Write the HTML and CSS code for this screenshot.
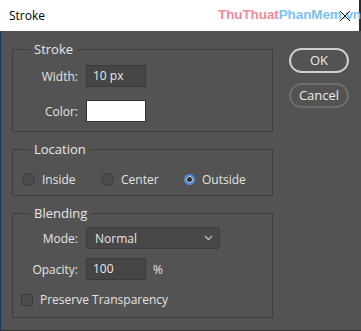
FILE: index.html
```html
<!DOCTYPE html>
<html lang="en">
<head>
    <meta charset="UTF-8">
    <title>Stroke</title>
    <link rel="stylesheet" href="styles.css">
</head>
<body>
    <div class="window">
        <div class="titlebar">
            <span class="title">Stroke</span>
            <span class="watermark"><span class="wm-pink">ThuThuat</span><span class="wm-blue">PhanMem.vn</span></span>
            <svg class="close" width="12" height="12" viewBox="0 0 12 12">
                <path d="M1 1 L11 11 M11 1 L1 11" stroke="#111" stroke-width="1" fill="none"/>
            </svg>
        </div>
        <div class="dialog">
            <div class="groups">
                <fieldset class="group group-stroke">
                    <legend>Stroke</legend>
                    <div class="row">
                        <label>Width:</label>
                        <div class="field">10 px</div>
                    </div>
                    <div class="row">
                        <label>Color:</label>
                        <div class="swatch"></div>
                    </div>
                </fieldset>

                <fieldset class="group group-location">
                    <legend>Location</legend>
                    <div class="radios">
                        <div class="radio radio-inside"><span class="dot"></span>Inside</div>
                        <div class="radio radio-center"><span class="dot"></span>Center</div>
                        <div class="radio"><span class="dot checked"></span>Outside</div>
                    </div>
                </fieldset>

                <fieldset class="group group-blending">
                    <legend>Blending</legend>
                    <div class="row">
                        <label>Mode:</label>
                        <div class="select">
                            <span>Normal</span>
                            <svg width="9" height="6" viewBox="0 0 9 6">
                                <path d="M1 1 L4.5 4.5 L8 1" stroke="#bdbdbd" stroke-width="1.3" fill="none"/>
                            </svg>
                        </div>
                    </div>
                    <div class="row">
                        <label>Opacity:</label>
                        <div class="field">100</div>
                        <span class="unit">%</span>
                    </div>
                    <div class="check"><span class="box"></span>Preserve Transparency</div>
                </fieldset>
            </div>
            <div class="buttons">
                <div class="btn btn-ok">OK</div>
                <div class="btn">Cancel</div>
            </div>
        </div>
    </div>
</body>
</html>
```

FILE: styles.css
```css
body {
    margin: 0;
    background-color: #2a2a2a;
    font-family: 'Open Sans', 'Liberation Sans', sans-serif;
}
.window {
    width: 361px;
    height: 331px;
    display: flex;
    flex-direction: column;
    overflow: hidden;
}
.titlebar {
    height: 31px;
    flex-shrink: 0;
    background-color: #ffffff;
    display: flex;
    align-items: center;
    position: relative;
    border-right: 2px solid #2b2b2b;
}
.title {
    font-size: 12px;
    color: #000;
    margin-left: 9px;
}
.watermark {
    position: absolute;
    left: 218px;
    top: 7px;
    white-space: nowrap;
    font-family: 'Liberation Sans', sans-serif;
    font-weight: bold;
    font-size: 13.5px;
    letter-spacing: -0.1px;
}
.wm-pink {
    color: #f28a9b;
}
.wm-blue {
    color: #7fc0f2;
}
.close {
    position: absolute;
    left: 339px;
    top: 10px;
}
.dialog {
    flex: 1;
    background-color: #535353;
    border-left: 1px solid #1d3557;
    border-bottom: 1px solid #333;
    display: flex;
    padding: 10px 0 0 11px;
    color: #e4e4e4;
    font-size: 12px;
}
.groups {
    width: 261px;
    flex-shrink: 0;
}
.group {
    margin: 0 0 9px 0;
    padding: 0;
    border: 1px solid #3d3d3d;
    min-width: 0;
}
.group legend {
    margin-left: 17px;
    padding: 0 4px;
    font-size: 13px;
    line-height: 16px;
    color: #e8e8e8;
}
.group-stroke {
    padding: 8px 0 9px 0;
}
.group-location {
    padding: 13px 0 7px 0;
}
.group-blending {
    padding: 6px 0 9px 0;
}
.row {
    display: grid;
    grid-template-columns: 65px auto auto;
    justify-content: start;
    align-items: center;
    column-gap: 8px;
    margin-bottom: 13px;
}
.row:last-child {
    margin-bottom: 0;
}
.group-blending .row {
    margin-bottom: 9px;
}
.row label {
    text-align: right;
}
.field {
    width: 52px;
    height: 20px;
    line-height: 20px;
    padding-left: 6px;
    background-color: #454545;
    border: 1px solid #3a3a3a;
    color: #ececec;
}
.swatch {
    width: 58px;
    height: 20px;
    background-color: #ffffff;
    border: 1px solid #333;
}
.unit {
    margin-left: -1px;
}
.select {
    width: 118px;
    height: 20px;
    padding: 0 6px 0 8px;
    display: flex;
    align-items: center;
    justify-content: space-between;
    background-color: #474747;
    border: 1px solid #3c3c3c;
    border-radius: 3px;
}
.radios {
    display: flex;
    align-items: center;
    height: 18px;
    padding-left: 9px;
}
.radio {
    display: flex;
    align-items: center;
    gap: 7px;
}
.radio-inside {
    width: 79px;
}
.radio-center {
    width: 83px;
}
.dot {
    width: 11px;
    height: 11px;
    border-radius: 50%;
    border: 1px solid #3a3a3a;
    background-color: #4c4c4c;
}
.dot.checked {
    width: 7px;
    height: 7px;
    border: 2px solid #4a90e2;
    background-color: #2b2b2b;
    box-shadow: inset 0 0 0 1px #d8d8d8;
}
.check {
    display: flex;
    align-items: center;
    height: 17px;
    gap: 7px;
    margin: 11px 0 0 8px;
}
.box {
    width: 10px;
    height: 10px;
    border: 1px solid #3a3a3a;
    border-radius: 2px;
    background-color: #4c4c4c;
}
.buttons {
    margin-left: 16px;
    padding-top: 7px;
    display: flex;
    flex-direction: column;
    gap: 10px;
}
.btn {
    width: 56px;
    height: 21px;
    line-height: 21px;
    text-align: center;
    border: 2px solid #6e6e6e;
    border-radius: 13px;
    font-size: 13px;
    color: #ececec;
}
.btn-ok {
    border-color: #cfcfcf;
}
```
